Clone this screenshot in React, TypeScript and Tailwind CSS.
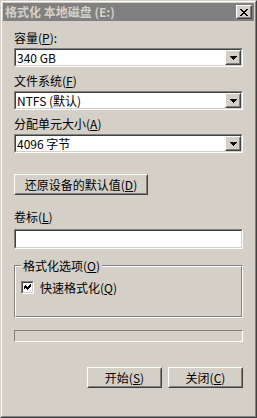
import React from "react";

const Raised = ({ className = "", children }: { className?: string; children?: React.ReactNode }) => (
  <div className={`border border-t-white border-l-white border-r-[#404040] border-b-[#404040] ${className}`}>
    <div className="w-full h-full border border-t-[#d4d0c8] border-l-[#d4d0c8] border-r-[#808080] border-b-[#808080] flex items-center justify-center">
      {children}
    </div>
  </div>
);

const Sunken = ({ className = "", children }: { className?: string; children?: React.ReactNode }) => (
  <div className={`border border-t-[#808080] border-l-[#808080] border-r-white border-b-white ${className}`}>
    <div className="w-full h-full border border-t-[#404040] border-l-[#404040] border-r-[#d4d0c8] border-b-[#d4d0c8] bg-white flex items-center">
      {children}
    </div>
  </div>
);

const Combo = ({ value }: { value: string }) => (
  <Sunken className="h-[19px] mt-[3px]">
    <span className="flex-1 pl-[1px] leading-[14px] whitespace-pre">{value}</span>
    <Raised className="w-[16px] h-[15px] bg-[#d4d0c8]">
      <svg width="7" height="4" viewBox="0 0 7 4">
        <path d="M0 0h7v1H0zM1 1h5v1H1zM2 2h3v1H2zM3 3h1v1H3z" fill="#000" />
      </svg>
    </Raised>
  </Sunken>
);

const Label = ({ text, k, tail = "", className = "" }: { text: string; k: string; tail?: string; className?: string }) => (
  <div className={`h-[14px] leading-[14px] whitespace-pre ${className}`}>
    {text}(<span className="underline">{k}</span>){tail}
  </div>
);

export default function App() {
  return (
    <div className="w-[257px] h-[418px] bg-[#d4d0c8] border border-t-[#d4d0c8] border-l-[#d4d0c8] border-r-[#404040] border-b-[#404040] text-[12px] text-black font-['Noto_Sans_CJK_SC',sans-serif]">
      <div className="h-full border border-t-white border-l-white border-r-[#808080] border-b-[#808080] p-px flex flex-col">
        {/* title bar */}
        <div className="h-[18px] bg-[#808080] flex items-center justify-between pl-[2px] pr-[2px]">
          <span className="font-bold text-[#d4d0c8] leading-[14px] whitespace-pre">格式化 本地磁盘 (E:)</span>
          <Raised className="w-[16px] h-[14px] bg-[#d4d0c8]">
            <svg width="8" height="7" viewBox="0 0 8 7">
              <path d="M0 0h2v1H0zM6 0h2v1H6zM1 1h2v1H1zM5 1h2v1H5zM2 2h4v1H2zM3 3h2v1H3zM2 4h4v1H2zM1 5h2v1H1zM5 5h2v1H5zM0 6h2v1H0zM6 6h2v1H6z" fill="#000" />
            </svg>
          </Raised>
        </div>

        <div className="flex-1 px-[11px] flex flex-col">
          <Label text="容量" k="P" tail=":" className="mt-[10px]" />
          <Combo value="340 GB" />

          <Label text="文件系统" k="F" className="mt-[7px]" />
          <Combo value="NTFS (默认)" />

          <Label text="分配单元大小" k="A" className="mt-[7px]" />
          <Combo value="4096 字节" />

          <Raised className="w-[134px] h-[21px] mt-[21px]">
            <span className="leading-[14px]">
              还原设备的默认值(<span className="underline">D</span>)
            </span>
          </Raised>

          <Label text="卷标" k="L" className="mt-[15px]" />
          <Sunken className="h-[20px] mt-[5px]" />

          {/* format options group */}
          <div className="h-[53px] mt-[16px] border border-t-[#808080] border-l-[#808080] border-r-white border-b-white">
            <div className="h-full border border-t-white border-l-white border-r-[#808080] border-b-[#808080] flex flex-col items-start">
              <div className="-mt-[8px] ml-[5px] px-[2px] bg-[#d4d0c8]">
                <Label text="格式化选项" k="O" />
              </div>
              <div className="flex items-center mt-[8px] ml-[5px] h-[13px]">
                <div className="w-[13px] h-[13px] border border-t-[#808080] border-l-[#808080] border-r-white border-b-white">
                  <div className="w-full h-full border border-t-[#404040] border-l-[#404040] border-r-[#d4d0c8] border-b-[#d4d0c8] bg-white flex items-center justify-center">
                    <svg width="7" height="7" viewBox="0 0 7 7">
                      <path d="M6 0h1v3H6zM5 1h1v3H5zM4 2h1v3H4zM3 3h1v3H3zM2 2h1v3H2zM1 1h1v3H1zM0 2h1v3H0z" fill="#000" />
                    </svg>
                  </div>
                </div>
                <Label text="快速格式化" k="Q" className="ml-[6px]" />
              </div>
            </div>
          </div>

          {/* progress */}
          <div className="h-[12px] mt-[12px] border border-t-[#808080] border-l-[#808080] border-r-white border-b-white" />

          <div className="flex justify-end gap-[6px] mt-[25px]">
            <Raised className="w-[75px] h-[21px]">
              <span className="leading-[14px]">
                开始(<span className="underline">S</span>)
              </span>
            </Raised>
            <Raised className="w-[75px] h-[21px]">
              <span className="leading-[14px]">
                关闭(<span className="underline">C</span>)
              </span>
            </Raised>
          </div>
        </div>
      </div>
    </div>
  );
}
